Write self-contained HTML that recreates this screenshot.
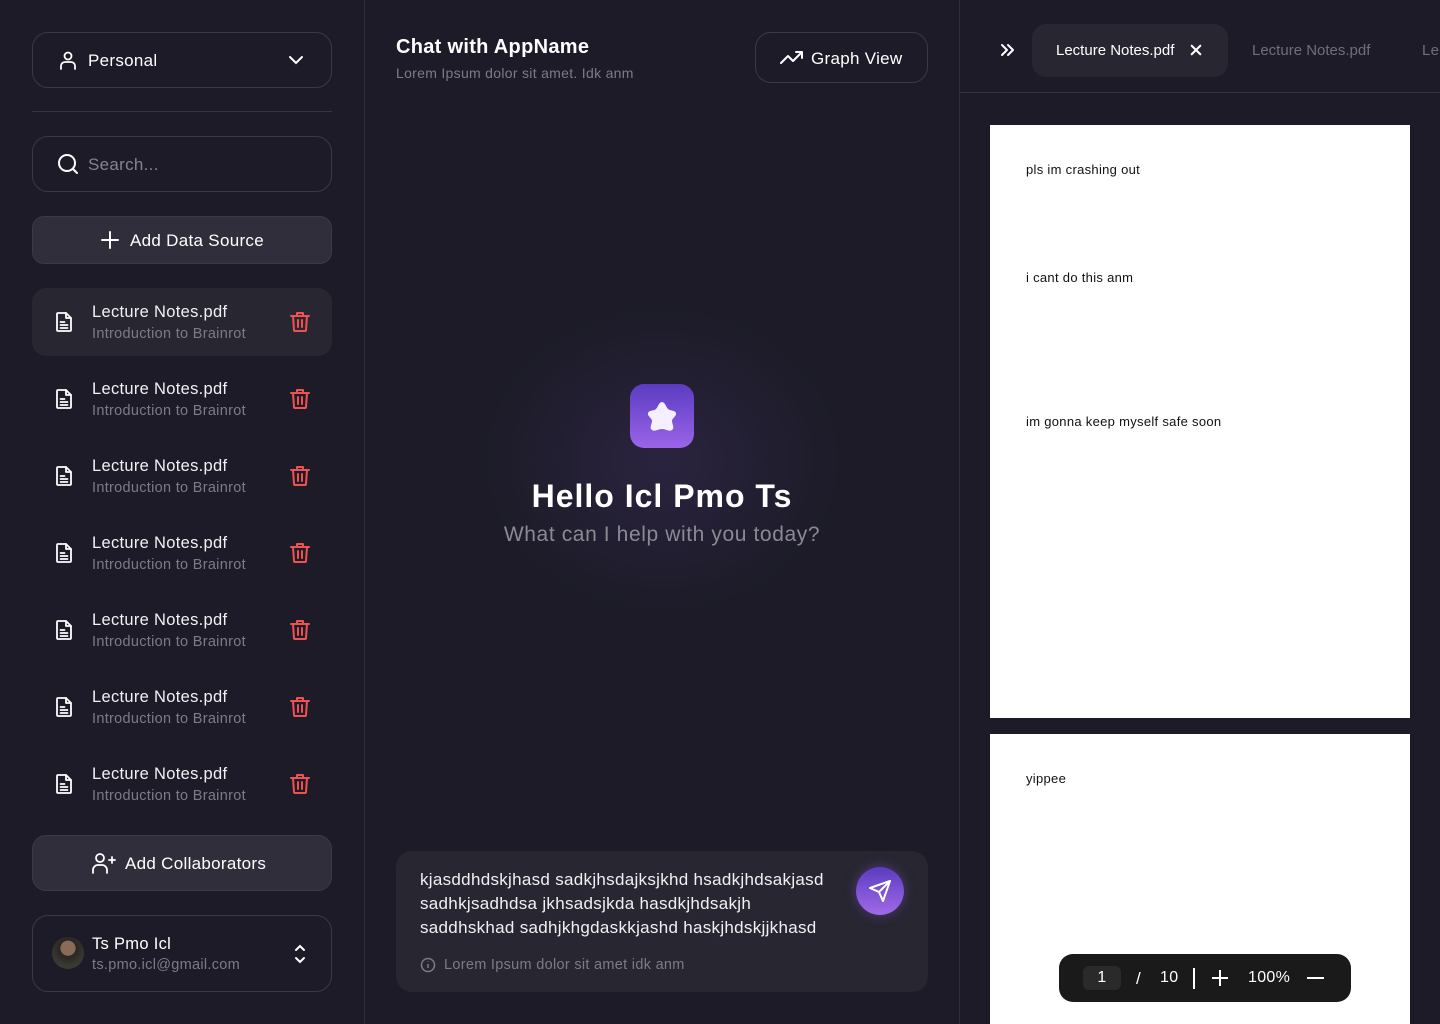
<!DOCTYPE html>
<html style="width:1440px;height:1024px;overflow:hidden"><head><meta charset="utf-8"><style>
*{box-sizing:border-box;margin:0;padding:0}
body{width:1440px;height:1024px;background:#1c1b27;font-family:"Liberation Sans",sans-serif;color:#fff;position:relative;overflow:hidden;letter-spacing:0.3px}
.abs{position:absolute}
.box{position:absolute;border:1px solid #3a3946;border-radius:16px}
.item{position:absolute;left:32px;width:300px;height:68px;border-radius:14px}
.item .t{position:absolute;left:60px;top:15px;font-size:16.5px;color:#f1f1f4}
.item .s{position:absolute;left:60px;top:38px;font-size:14.5px;color:#7c7b86}
.item svg.f{position:absolute;left:20px;top:22px}
.item svg.d{position:absolute;left:256px;top:22px}
</style></head><body>
<div class="abs" style="left:364px;top:0;width:1px;height:1024px;background:#2e2d3a"></div>
<div class="abs" style="left:959px;top:0;width:1px;height:1024px;background:#2e2d3a"></div>
<div class="box" style="left:32px;top:32px;width:300px;height:56px"></div>
<svg class="abs" style="left:56px;top:48px" width="24" height="24" viewBox="0 0 24 24" fill="none" stroke="#fff" stroke-width="1.8" stroke-linecap="round"><circle cx="12" cy="8" r="3.5"/><path d="M5 21v-3a4 4 0 0 1 4-4h6a4 4 0 0 1 4 4v3"/></svg>
<div class="abs" style="left:88px;top:51px;font-size:17px">Personal</div>
<svg class="abs" style="left:286px;top:50px" width="20" height="20" viewBox="0 0 20 20" fill="none" stroke="#fff" stroke-width="2" stroke-linecap="round"><path d="M4 7l6 6 6-6"/></svg>
<div class="abs" style="left:32px;top:111px;width:300px;height:1px;background:#34333f"></div>
<div class="box" style="left:32px;top:136px;width:300px;height:56px"></div>
<svg class="abs" style="left:56px;top:152px" width="24" height="24" viewBox="0 0 24 24" fill="none" stroke="#fff" stroke-width="2" stroke-linecap="round"><circle cx="11" cy="11" r="8"/><path d="M17 17l4 4"/></svg>
<div class="abs" style="left:88px;top:155px;font-size:17px;color:#85848e">Search...</div>
<div class="abs" style="left:32px;top:216px;width:300px;height:48px;border-radius:12px;background:#2f2e3a;border:1px solid #3a3946"></div>
<svg class="abs" style="left:100px;top:230px" width="20" height="20" viewBox="0 0 20 20" stroke="#fff" stroke-width="2" stroke-linecap="round"><path d="M10 2v16M2 10h16"/></svg>
<div class="abs" style="left:130px;top:231px;font-size:17px">Add Data Source</div>

<div class="item" style="top:288px;background:#272631"></div>
<div class="item" style="top:365px"></div><div class="item" style="top:442px"></div><div class="item" style="top:519px"></div><div class="item" style="top:596px"></div><div class="item" style="top:673px"></div><div class="item" style="top:750px"></div>
<script>
document.querySelectorAll('.item').forEach(el=>{el.innerHTML='<svg class="f" width="24" height="24" viewBox="0 0 24 24" fill="none" stroke="#fff" stroke-width="1.8" stroke-linejoin="round" stroke-linecap="round"><path d="M6 3h8l5 5v12a1 1 0 0 1-1 1H6a1 1 0 0 1-1-1V4a1 1 0 0 1 1-1z"/><path d="M14 3v5h5M8.5 12h4M8.5 15h7M8.5 18h7"/></svg><div class="t">Lecture Notes.pdf</div><div class="s">Introduction to Brainrot</div><svg class="d" width="24" height="24" viewBox="0 0 24 24" fill="none" stroke="#f05252" stroke-width="2" stroke-linecap="round" stroke-linejoin="round"><path d="M3 6h18M9 6V3h6v3M5 6l1 14a1 1 0 0 0 1 1h10a1 1 0 0 0 1-1l1-14M10 10v7M14 10v7"/></svg>';});
</script>

<div class="abs" style="left:32px;top:835px;width:300px;height:56px;border-radius:14px;background:#2f2e3a;border:1px solid #3a3946"></div>
<svg class="abs" style="left:91px;top:851px" width="26" height="24" viewBox="0 0 26 24" fill="none" stroke="#fff" stroke-width="1.8" stroke-linecap="round"><circle cx="9" cy="7" r="4"/><path d="M2 22v-3a5 5 0 0 1 5-5h4a5 5 0 0 1 5 5v3M21 6v6M18 9h6"/></svg>
<div class="abs" style="left:125px;top:854px;font-size:17px">Add Collaborators</div>
<div class="box" style="left:32px;top:915px;width:300px;height:77px"></div>
<div class="abs" style="left:52px;top:937px;width:32px;height:32px;border-radius:50%;background:radial-gradient(circle at 50% 35%,#8a6a58 0 28%,#2a2622 30%,#3a3a32 70%)"></div>
<div class="abs" style="left:92px;top:935px;font-size:16.5px">Ts Pmo Icl</div>
<div class="abs" style="left:92px;top:957px;font-size:14.5px;color:#7c7b86">ts.pmo.icl@gmail.com</div>
<svg class="abs" style="left:290px;top:942px" width="20" height="24" viewBox="0 0 20 24" fill="none" stroke="#fff" stroke-width="2" stroke-linecap="round"><path d="M6 8l4-4 4 4M6 16l4 4 4-4"/></svg>

<div class="abs" style="left:396px;top:36px;font-size:20px;font-weight:bold">Chat with AppName</div>
<div class="abs" style="left:396px;top:65px;font-size:14px;color:#7c7b86">Lorem Ipsum dolor sit amet. Idk anm</div>
<div class="box" style="left:755px;top:32px;width:173px;height:51px"></div>
<svg class="abs" style="left:779px;top:47px" width="26" height="20" viewBox="0 0 26 20" fill="none" stroke="#fff" stroke-width="2" stroke-linecap="round" stroke-linejoin="round"><path d="M2 16l7-7 5 5 9-9M17 5h6v6"/></svg>
<div class="abs" style="left:811px;top:49px;font-size:17px">Graph View</div>
<div class="abs" style="left:462px;top:290px;width:400px;height:340px;background:radial-gradient(ellipse at center,rgba(70,50,110,0.35),rgba(28,27,39,0) 65%)"></div>
<div class="abs" style="left:630px;top:384px;width:64px;height:64px;border-radius:14px;background:linear-gradient(#5a3cc0,#9a64e8)"></div>
<svg class="abs" style="left:642px;top:396px" width="40" height="40" viewBox="0 0 40 40"><path d="M20 6c3 0 4 5 6 7s7 1 8 4-4 5-4 8 3 7 0 9-6-1-10-1-7 3-10 1 0-6 0-9-5-5-4-8 6-2 8-4 3-7 6-7z" fill="#f5f0ff"/></svg>
<div class="abs" style="left:365px;top:478px;width:594px;text-align:center;font-size:32px;font-weight:bold;letter-spacing:1px">Hello Icl Pmo Ts</div>
<div class="abs" style="left:365px;top:523px;width:594px;text-align:center;font-size:21px;color:#8a8994;letter-spacing:0.6px">What can I help with you today?</div>
<div class="abs" style="left:396px;top:851px;width:532px;height:141px;border-radius:16px;background:#272631"></div>
<div class="abs" style="left:420px;top:868px;width:430px;font-size:17px;line-height:24px;color:#f1f1f4;white-space:nowrap">kjasddhdskjhasd sadkjhsdajksjkhd hsadkjhdsakjasd<br>sadhkjsadhdsa jkhsadsjkda hasdkjhdsakjh<br>saddhskhad sadhjkhgdaskkjashd haskjhdskjjkhasd</div>
<div class="abs" style="left:856px;top:867px;width:48px;height:48px;border-radius:50%;background:linear-gradient(#5a3cc0,#a06ae8);box-shadow:0 0 12px rgba(140,90,230,.4)"></div>
<svg class="abs" style="left:868px;top:879px" width="24" height="24" viewBox="0 0 24 24" fill="none" stroke="#fff" stroke-width="2" stroke-linejoin="round" stroke-linecap="round"><path d="M22 2L11 13M22 2l-7 20-4-9-9-4z"/></svg>
<svg class="abs" style="left:420px;top:957px" width="16" height="16" viewBox="0 0 16 16" fill="none" stroke="#7c7b86" stroke-width="1.5"><circle cx="8" cy="8" r="6.5"/><path d="M8 7v4M8 4.5v.5"/></svg>
<div class="abs" style="left:444px;top:957px;font-size:14.5px;color:#7c7b86">Lorem Ipsum dolor sit amet idk anm</div>

<div class="abs" style="left:960px;top:92px;width:480px;height:1px;background:#34333f"></div>
<svg class="abs" style="left:998px;top:40px" width="20" height="20" viewBox="0 0 20 20" fill="none" stroke="#fff" stroke-width="2" stroke-linecap="round" stroke-linejoin="round"><path d="M4 5l5 5-5 5M10 5l5 5-5 5"/></svg>
<div class="abs" style="left:1032px;top:24px;width:196px;height:53px;border-radius:14px;background:#272631"></div>
<div class="abs" style="left:1056px;top:42px;font-size:15px;letter-spacing:0">Lecture Notes.pdf</div>
<svg class="abs" style="left:1190px;top:44px" width="12" height="12" viewBox="0 0 14 14" stroke="#fff" stroke-width="2.4" stroke-linecap="round"><path d="M2 2l10 10M12 2L2 12"/></svg>
<div class="abs" style="left:1252px;top:42px;font-size:15px;color:#6f6e79;letter-spacing:0">Lecture Notes.pdf</div>
<div class="abs" style="left:1422px;top:42px;font-size:15px;color:#6f6e79;white-space:nowrap">Lecture</div>
<div class="abs" style="left:990px;top:125px;width:420px;height:593px;background:#fff;color:#111;font-size:13px">
<div class="abs" style="left:36px;top:37px">pls im crashing out</div>
<div class="abs" style="left:36px;top:145px">i cant do this anm</div>
<div class="abs" style="left:36px;top:289px">im gonna keep myself safe soon</div></div>
<div class="abs" style="left:990px;top:734px;width:420px;height:290px;background:#fff;color:#111;font-size:13px">
<div class="abs" style="left:36px;top:37px">yippee</div></div>
<div class="abs" style="left:1059px;top:954px;width:292px;height:48px;border-radius:14px;background:#1a1a1a"></div>
<div class="abs" style="left:1083px;top:966px;width:38px;height:24px;border-radius:6px;background:#2a2a2a;text-align:center;font-size:16px;line-height:24px">1</div>
<div class="abs" style="left:1136px;top:969px;font-size:17px">/</div>
<div class="abs" style="left:1160px;top:969px;font-size:16px">10</div>
<div class="abs" style="left:1193px;top:968px;width:1.5px;height:21px;background:#fff"></div>
<svg class="abs" style="left:1211px;top:969px" width="18" height="18" viewBox="0 0 18 18" stroke="#fff" stroke-width="2"><path d="M9 1v16M1 9h16"/></svg>
<div class="abs" style="left:1248px;top:969px;font-size:16px">100%</div>
<div class="abs" style="left:1307px;top:977px;width:17px;height:2px;background:#fff"></div>
</body></html>
